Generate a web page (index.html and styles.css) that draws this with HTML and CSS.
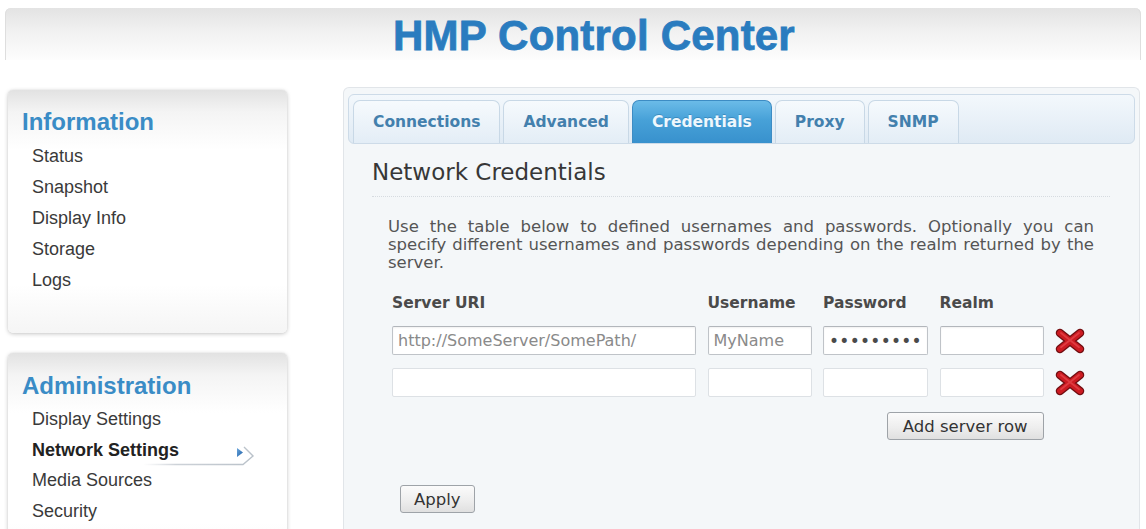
FILE: index.html
```html
<!DOCTYPE html>
<html lang="en">
<head>
<meta charset="utf-8">
<title>HMP Control Center</title>
<link rel="stylesheet" href="styles.css">
</head>
<body>
<header class="banner">
  <h1 class="banner-title">HMP Control Center</h1>
</header>

<div class="layout">
  <aside class="sidebar">
    <section class="nav-box nav-info">
      <h2 class="nav-title">Information</h2>
      <ul class="nav-list">
        <li class="nav-item">Status</li>
        <li class="nav-item">Snapshot</li>
        <li class="nav-item">Display Info</li>
        <li class="nav-item">Storage</li>
        <li class="nav-item">Logs</li>
      </ul>
    </section>

    <section class="nav-box nav-admin">
      <h2 class="nav-title">Administration</h2>
      <ul class="nav-list">
        <li class="nav-item">Display Settings</li>
        <li class="nav-item current">Network Settings
          <svg class="current-mark" width="116" height="24" viewBox="0 0 116 24" aria-hidden="true">
            <defs>
              <linearGradient id="underline" x1="0" x2="1" y1="0" y2="0">
                <stop offset="0" stop-color="#d6dadf" stop-opacity="0"/>
                <stop offset="0.3" stop-color="#cdd2d8"/>
                <stop offset="1" stop-color="#b9c1c9"/>
              </linearGradient>
              <linearGradient id="pointer" x1="0" x2="1" y1="0" y2="1">
                <stop offset="0" stop-color="#6aa6dc"/>
                <stop offset="1" stop-color="#1f5fa6"/>
              </linearGradient>
            </defs>
            <path d="M1 20.5 H101 L111 12 L102 3" fill="none" stroke="url(#underline)" stroke-width="1.4"/>
            <path d="M95 4 L101 8.5 L95 13 Z" fill="url(#pointer)"/>
          </svg>
        </li>
        <li class="nav-item">Media Sources</li>
        <li class="nav-item">Security</li>
      </ul>
    </section>
  </aside>

  <main class="panel">
    <nav class="tabbar">
      <span class="tab">Connections</span>
      <span class="tab">Advanced</span>
      <span class="tab active">Credentials</span>
      <span class="tab">Proxy</span>
      <span class="tab">SNMP</span>
    </nav>

    <div class="panel-body">
      <h3 class="section-title">Network Credentials</h3>
      <p class="intro">Use the table below to defined usernames and passwords. Optionally you can specify different usernames and passwords depending on the realm returned by the server.</p>

      <div class="cred-grid">
        <span class="col-label">Server URI</span>
        <span class="col-label">Username</span>
        <span class="col-label">Password</span>
        <span class="col-label">Realm</span>
        <span></span>

        <input class="field" type="text" value="http://SomeServer/SomePath/">
        <input class="field" type="text" value="MyName">
        <input class="field secret" type="password" value="123456789">
        <input class="field" type="text" value="">
        <span class="remove" title="Remove row">
          <svg width="30" height="26" viewBox="0 0 30 26" aria-hidden="true">
            <path d="M5 5 L25 21 M25 5 L5 21" stroke="#6f0d10" stroke-width="8.5" stroke-linecap="round"/>
            <path d="M5 5 L25 21 M25 5 L5 21" stroke="#cc1b22" stroke-width="6" stroke-linecap="round"/>
            <path d="M6 5 L24 19.2 M24 5 L6 19.2" stroke="#e8494e" stroke-width="1.8" stroke-linecap="round" opacity="0.7"/>
          </svg>
        </span>

        <input class="field blank" type="text" value="">
        <input class="field blank" type="text" value="">
        <input class="field blank" type="text" value="">
        <input class="field blank" type="text" value="">
        <span class="remove" title="Remove row">
          <svg width="30" height="26" viewBox="0 0 30 26" aria-hidden="true">
            <path d="M5 5 L25 21 M25 5 L5 21" stroke="#6f0d10" stroke-width="8.5" stroke-linecap="round"/>
            <path d="M5 5 L25 21 M25 5 L5 21" stroke="#cc1b22" stroke-width="6" stroke-linecap="round"/>
            <path d="M6 5 L24 19.2 M24 5 L6 19.2" stroke="#e8494e" stroke-width="1.8" stroke-linecap="round" opacity="0.7"/>
          </svg>
        </span>

        <button class="btn add-row" type="button">Add server row</button>
      </div>

      <button class="btn apply" type="button">Apply</button>
    </div>
  </main>
</div>
</body>
</html>
```

FILE: styles.css
```css
html, body {
  margin: 0;
  padding: 0;
  background: #ffffff;
  overflow: hidden;
}

body {
  font-family: "Liberation Sans", Arial, sans-serif;
  color: #333;
}

/* ---------- top banner ---------- */
.banner {
  margin: 8px 5px 0 5px;
  height: 52px;
  border-radius: 6px 6px 0 0;
  background: linear-gradient(#e3e3e3 0%, #f1f1f1 45%, #fdfdfd 100%);
  box-shadow: inset 1px 0 0 #dedede, inset -1px 0 0 #dedede;
}

.banner-title {
  margin: 0;
  padding: 4px 0 0 42px;
  text-align: center;
  font-family: "Liberation Sans", Arial, sans-serif;
  font-weight: bold;
  font-size: 42px;
  line-height: 48px;
  letter-spacing: 0.2px;
  color: #2a7cbf;
  -webkit-text-stroke: 0.8px #2a7cbf;
}

/* ---------- page columns ---------- */
.layout {
  display: flex;
  align-items: flex-start;
  margin-top: 27px;
}

.sidebar {
  width: 279px;
  margin-left: 8px;
  padding-top: 3px;
  display: flex;
  flex-direction: column;
  gap: 20px;
}

.nav-box {
  border-radius: 5px;
  background: linear-gradient(#e2e2e2 0, #f4f4f4 22px, #ffffff 60px, #ffffff 80%, #f5f5f5 100%);
  box-shadow: 0 1px 4px rgba(0, 0, 0, 0.22), 0 0 1px rgba(0, 0, 0, 0.15);
  padding: 18px 0 0 14px;
}

.nav-info {
  padding-bottom: 37px;
}

.nav-admin {
  padding-top: 19px;
  padding-bottom: 40px;
}

.nav-title {
  margin: 0;
  font-size: 24px;
  line-height: 28px;
  font-weight: bold;
  color: #3a8cc6;
}

.nav-list {
  list-style: none;
  margin: 5px 0 0 0;
  padding: 0 0 0 10px;
}

.nav-admin .nav-list {
  margin-top: 4px;
}

.nav-item {
  position: relative;
  font-size: 18px;
  line-height: 31px;
  color: #3a3a3a;
}

.nav-admin .nav-item {
  line-height: 30.5px;
}

.nav-item.current {
  font-weight: bold;
  color: #222;
}

.current-mark {
  position: absolute;
  left: 110px;
  top: 9px;
}

/* ---------- main panel ---------- */
.panel {
  margin-left: 56px;
  width: 795px;
  min-height: 460px;
  background: #f4f7f9;
  border: 1px solid #e1e5e9;
  border-bottom: none;
  border-radius: 6px 6px 0 0;
}

.tabbar {
  display: flex;
  align-items: flex-end;
  gap: 3px;
  margin: 6px 4px 0 4px;
  height: 44px;
  padding: 4px 0 0 4px;
  border: 1px solid #cddbe8;
  border-radius: 6px;
  background: linear-gradient(#f3f8fc, #dfeaf4);
}

.tab {
  height: 43px;
  box-sizing: border-box;
  padding: 0 19px;
  display: flex;
  align-items: center;
  font-family: "DejaVu Sans", Verdana, sans-serif;
  font-weight: bold;
  font-size: 15.5px;
  color: #4380ad;
  border: 1px solid #c8d8e6;
  border-bottom: none;
  border-radius: 7px 7px 0 0;
  background: linear-gradient(#f6fafd, #e3edf6);
}

.tab.active {
  color: #eef7fd;
  border-color: #3d8cc4;
  background: linear-gradient(#6bbbe8 0%, #47a1d8 45%, #3891cd 100%);
  text-shadow: 0 -1px 0 rgba(0, 60, 110, 0.25);
}

.panel-body {
  padding: 0 29px 0 28px;
  font-family: "DejaVu Sans", Verdana, sans-serif;
}

.section-title {
  margin: 14px 0 0 0;
  padding-bottom: 10px;
  font-family: "DejaVu Sans", Verdana, sans-serif;
  font-weight: normal;
  font-size: 23px;
  line-height: 28px;
  color: #373737;
  border-bottom: 1px dotted #d6dbe0;
}

.intro {
  margin: 21px 0 0 16px;
  width: 706px;
  font-size: 16.5px;
  line-height: 18px;
  text-align: justify;
  color: #555;
}

/* ---------- credentials table ---------- */
.cred-grid {
  display: grid;
  grid-template-columns: 304px 104px 105px 104px 30px;
  grid-template-rows: 20px 29px 29px auto;
  column-gap: 11.5px;
  row-gap: 13px;
  margin: 21px 0 0 20px;
  align-items: center;
}

.col-label {
  font-weight: bold;
  font-size: 15.5px;
  line-height: 20px;
  color: #4a4a4a;
}

.field {
  box-sizing: border-box;
  width: 100%;
  height: 29px;
  margin: 0;
  padding: 0 5px;
  border: 1px solid #bfc3c8;
  border-top-color: #b2b6bb;
  border-radius: 2px;
  background: #ffffff;
  box-shadow: inset 0 1px 2px rgba(0, 0, 0, 0.06);
  font-family: "DejaVu Sans", Verdana, sans-serif;
  font-size: 16px;
  color: #8a8a8a;
  outline: none;
}

.field.secret {
  color: #4a4a4a;
  font-size: 17px;
  letter-spacing: 0.3px;
}

.field.blank {
  border-color: #dde1e5;
  box-shadow: none;
}

.remove {
  display: flex;
  align-items: center;
  justify-content: flex-start;
}

.btn {
  box-sizing: border-box;
  height: 28px;
  margin: 0;
  border: 1px solid #9ea3a8;
  border-radius: 3px;
  background: linear-gradient(#fbfbfb 0%, #eeeeee 55%, #e0e0e0 100%);
  font-family: "DejaVu Sans", Verdana, sans-serif;
  font-size: 16.5px;
  color: #333;
  cursor: pointer;
}

.add-row {
  grid-column: 3 / 5;
  justify-self: end;
  margin-top: 2px;
  padding: 0 15px;
}

.apply {
  display: block;
  margin: 45px 0 0 28px;
  padding: 0 13px;
}
```
